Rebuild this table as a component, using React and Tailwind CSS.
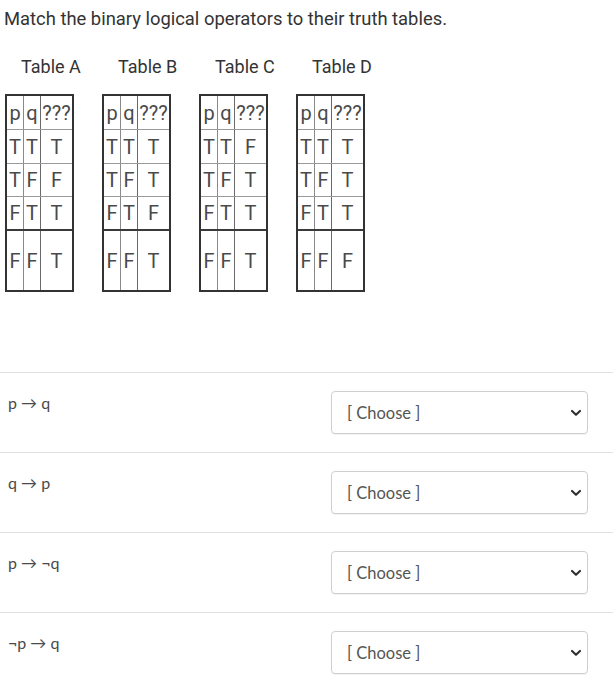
import React from "react";

const tables = [
  { label: "Table A", vals: ["T", "F", "T", "T"] },
  { label: "Table B", vals: ["T", "T", "F", "T"] },
  { label: "Table C", vals: ["F", "T", "T", "T"] },
  { label: "Table D", vals: ["T", "T", "T", "F"] },
];

const pq = [
  ["T", "T"],
  ["T", "F"],
  ["F", "T"],
  ["F", "F"],
];

const rowClasses = [
  "h-[34px] border-b border-[#9a9a9a]",
  "h-[34px] border-b border-[#9a9a9a]",
  "h-[33px] border-b border-[#9a9a9a]",
  "h-[34px] border-b-2 border-[#3a3a3a]",
  "h-[59px]",
];

function Row({ cls, a, b, c }) {
  return (
    <div className={"flex items-center " + cls}>
      <div className="w-[17px] h-full border-r border-[#8a8a8a] flex items-center justify-center">{a}</div>
      <div className="w-[17px] h-full border-r border-[#6a6a6a] flex items-center justify-center">{b}</div>
      <div className="flex-1 h-full flex items-center justify-center">{c}</div>
    </div>
  );
}

function TruthTable({ vals }) {
  return (
    <div
      className="w-[69px] border-2 border-[#333] text-[20px] leading-none text-[#4a4a4a] flex flex-col"
      style={{ fontFamily: "Roboto, 'Liberation Sans', sans-serif" }}
    >
      <Row cls={rowClasses[0]} a="p" b="q" c="???" />
      {pq.map((r, i) => (
        <Row key={i} cls={rowClasses[i + 1]} a={r[0]} b={r[1]} c={vals[i]} />
      ))}
    </div>
  );
}

function Chevron() {
  return (
    <svg width="12" height="8" viewBox="0 0 12 8" fill="none">
      <path d="M2 2 L6 5.8 L10 2" stroke="#333" strokeWidth="2.2" strokeLinecap="round" strokeLinejoin="round" />
    </svg>
  );
}

const answers = [
  <>p → q</>,
  <>q → p</>,
  <>p → ¬q</>,
  <>¬p → q</>,
];

export default function App() {
  return (
    <div className="w-[613px] h-[700px] bg-white overflow-hidden">
      <div
        className="pt-[7px] pl-[4px] text-[18.4px] leading-[24px] text-[#333]"
        style={{ fontFamily: "Roboto, 'Liberation Sans', sans-serif" }}
      >
        Match the binary logical operators to their truth tables.
      </div>
      <div
        className="mt-[24px] flex pl-[21px] text-[18px] leading-[24px] text-[#333]"
        style={{ fontFamily: "Roboto, 'Liberation Sans', sans-serif" }}
      >
        {tables.map((t) => (
          <div key={t.label} className="w-[97px]">
            {t.label}
          </div>
        ))}
      </div>
      <div className="mt-[15px] flex gap-[28px] pl-[5px]">
        {tables.map((t) => (
          <TruthTable key={t.label} vals={t.vals} />
        ))}
      </div>
      <div className="mt-[80px]" style={{ fontFamily: "Lato, 'Liberation Sans', sans-serif" }}>
        {answers.map((a, i) => (
          <div key={i} className="h-[80px] border-t border-[#e0e0e0] pt-[18px] flex items-start justify-between pr-[25px]">
            <div className="pl-[8px] text-[16px] leading-[24px] text-[#4a4a4a]">{a}</div>
            <div className="w-[257px] h-[43px] border border-[#cfcfcf] rounded-[4px] shadow-[0_1px_1px_rgba(0,0,0,0.06)] flex items-center justify-between pl-[15px] pr-[5px]">
              <span className="text-[16.5px] leading-[24px] text-[#555]">[ Choose ]</span>
              <Chevron />
            </div>
          </div>
        ))}
      </div>
    </div>
  );
}
